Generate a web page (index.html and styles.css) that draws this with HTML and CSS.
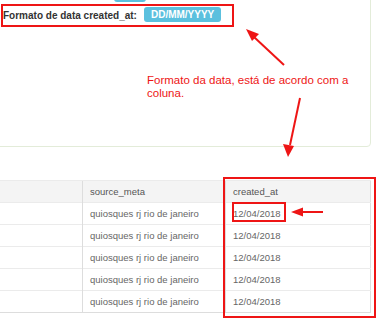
FILE: index.html
```html
<!DOCTYPE html>
<html lang="pt">
<head>
<meta charset="utf-8">
<title>Formato de data</title>
<link rel="stylesheet" href="styles.css">
</head>
<body>
<div class="page">
  <div class="panel">
    <div class="btn-top"></div>
    <div class="fmt-row">
      <span class="fmt-label">Formato de data created_at:</span>
      <span class="badge">DD/MM/YYYY</span>
    </div>
  </div>

  <table class="grid">
    <colgroup>
      <col class="c1"><col class="c2"><col class="c3">
    </colgroup>
    <thead>
      <tr><th></th><th>source_meta</th><th>created_at</th></tr>
    </thead>
    <tbody>
      <tr><td></td><td>quiosques rj rio de janeiro</td><td>12/04/2018</td></tr>
      <tr><td></td><td>quiosques rj rio de janeiro</td><td>12/04/2018</td></tr>
      <tr><td></td><td>quiosques rj rio de janeiro</td><td>12/04/2018</td></tr>
      <tr><td></td><td>quiosques rj rio de janeiro</td><td>12/04/2018</td></tr>
      <tr><td></td><td>quiosques rj rio de janeiro</td><td>12/04/2018</td></tr>
    </tbody>
  </table>

  <p class="note">Formato da data, está de acordo com a<br>coluna.</p>

  <svg class="marks" width="382" height="324" viewBox="0 0 382 324">
    <g fill="none" stroke="#ee1515" stroke-width="2">
      <rect x="224" y="178" width="151" height="139"/>
      <rect x="233" y="203" width="52" height="18"/>
      <line x1="284" y1="65" x2="254" y2="37"/>
      <line x1="300" y1="98" x2="290" y2="145"/>
      <line x1="323" y1="212" x2="302" y2="212"/>
    </g>
    <g fill="#ee1515">
      <polygon points="246,29 259,34 252,41"/>
      <polygon points="288,157 283,144 294,146"/>
      <polygon points="291,212 303,207.5 303,216.5"/>
    </g>
  </svg>
</div>
</body>
</html>
```

FILE: styles.css
```css
* { box-sizing: border-box; }

html, body {
  margin: 0;
  padding: 0;
  background: #ffffff;
}

body {
  width: 382px;
  height: 324px;
  overflow: hidden;
  font-family: "Liberation Sans", Arial, Helvetica, sans-serif;
}

.page {
  position: relative;
  width: 382px;
  height: 324px;
  overflow: hidden;
}

.panel {
  margin: -20px 0 0 -10px;
  width: 381px;
  height: 167px;
  border: 1px solid #e3ecd9;
  border-radius: 4px;
  background: #ffffff;
}

.btn-top {
  margin-left: 123px;
  width: 32px;
  height: 21px;
  background: #5bc0de;
  border-radius: 0 0 3px 3px;
}

.fmt-row {
  display: inline-flex;
  align-items: center;
  gap: 7px;
  margin: 2px 0 0 10px;
  height: 23px;
  padding: 0 11px 0 0;
  border: 2px solid #ee1515;
}

.fmt-label {
  font-size: 10px;
  font-weight: bold;
  color: #333333;
}

.badge {
  display: inline-block;
  height: 15px;
  line-height: 15px;
  padding: 0 7px;
  border-radius: 3px;
  background: #5bc0de;
  color: #ffffff;
  font-size: 10px;
  font-weight: bold;
  margin-top: -2px;
}

.grid {
  margin: 33px 0 0 -10px;
  width: 380px;
  border-collapse: collapse;
  table-layout: fixed;
  border: 1px solid #dddddd;
  font-size: 9.5px;
}

.c1 { width: 92px; }
.c2 { width: 143px; }
.c3 { width: 145px; }

.grid th,
.grid td {
  padding: 0 0 0 7px;
  text-align: left;
  font-weight: normal;
  white-space: nowrap;
  border-left: 1px solid #dddddd;
  border-top: 1px solid #ebebeb;
}

.grid th {
  height: 22px;
  background: #f4f4f4;
  color: #555555;
}

.grid td {
  height: 22px;
  color: #666666;
}

.note {
  position: absolute;
  left: 147px;
  top: 74px;
  margin: 0;
  font-size: 11.5px;
  line-height: 12.5px;
  color: #ee1515;
}

.marks {
  position: absolute;
  left: 0;
  top: 0;
}
```
